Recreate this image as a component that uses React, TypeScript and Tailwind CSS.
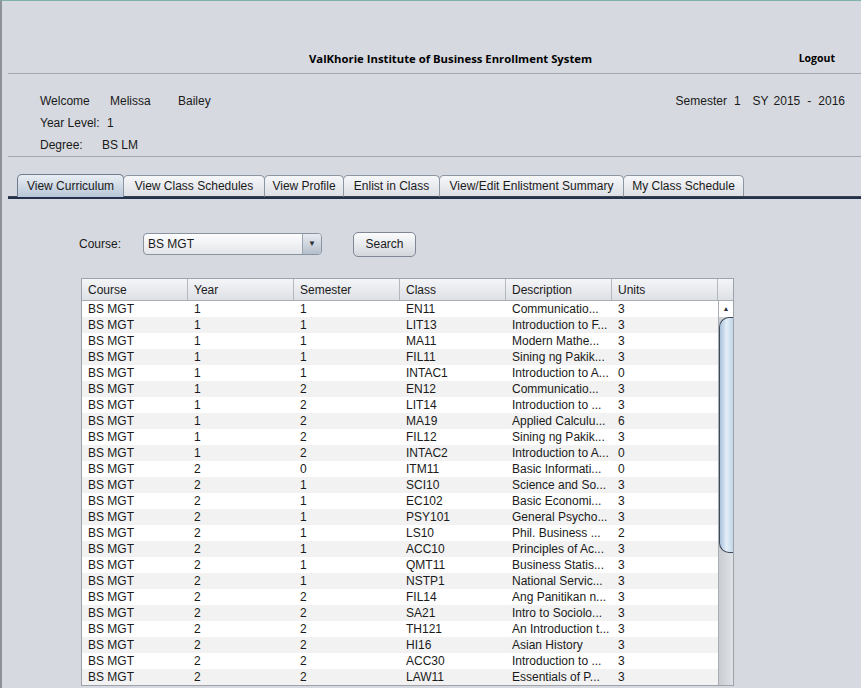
import React from 'react';

const rows: string[][] = [
  ['BS MGT', '1', '1', 'EN11', 'Communicatio...', '3'],
  ['BS MGT', '1', '1', 'LIT13', 'Introduction to F...', '3'],
  ['BS MGT', '1', '1', 'MA11', 'Modern Mathe...', '3'],
  ['BS MGT', '1', '1', 'FIL11', 'Sining ng Pakik...', '3'],
  ['BS MGT', '1', '1', 'INTAC1', 'Introduction to A...', '0'],
  ['BS MGT', '1', '2', 'EN12', 'Communicatio...', '3'],
  ['BS MGT', '1', '2', 'LIT14', 'Introduction to ...', '3'],
  ['BS MGT', '1', '2', 'MA19', 'Applied Calculu...', '6'],
  ['BS MGT', '1', '2', 'FIL12', 'Sining ng Pakik...', '3'],
  ['BS MGT', '1', '2', 'INTAC2', 'Introduction to A...', '0'],
  ['BS MGT', '2', '0', 'ITM11', 'Basic Informati...', '0'],
  ['BS MGT', '2', '1', 'SCI10', 'Science and So...', '3'],
  ['BS MGT', '2', '1', 'EC102', 'Basic Economi...', '3'],
  ['BS MGT', '2', '1', 'PSY101', 'General Psycho...', '3'],
  ['BS MGT', '2', '1', 'LS10', 'Phil. Business ...', '2'],
  ['BS MGT', '2', '1', 'ACC10', 'Principles of Ac...', '3'],
  ['BS MGT', '2', '1', 'QMT11', 'Business Statis...', '3'],
  ['BS MGT', '2', '1', 'NSTP1', 'National Servic...', '3'],
  ['BS MGT', '2', '2', 'FIL14', 'Ang Panitikan n...', '3'],
  ['BS MGT', '2', '2', 'SA21', 'Intro to Sociolo...', '3'],
  ['BS MGT', '2', '2', 'TH121', 'An Introduction t...', '3'],
  ['BS MGT', '2', '2', 'HI16', 'Asian History', '3'],
  ['BS MGT', '2', '2', 'ACC30', 'Introduction to ...', '3'],
  ['BS MGT', '2', '2', 'LAW11', 'Essentials of P...', '3'],
];

const headers = ['Course', 'Year', 'Semester', 'Class', 'Description', 'Units'];

const tabs = [
  { label: 'View Curriculum', w: 'w-[107px]', active: true },
  { label: 'View Class Schedules', w: 'w-[142px]' },
  { label: 'View Profile', w: 'w-[80px]' },
  { label: 'Enlist in Class', w: 'w-[97px]' },
  { label: 'View/Edit Enlistment Summary', w: 'w-[185px]' },
  { label: 'My Class Schedule', w: 'w-[121px]' },
];

export default function App() {
  return (
    <div
      className="w-[861px] h-[688px] overflow-hidden bg-[#d6d9df] border-t border-t-[#7fb3aa] border-l-2 border-l-[#8d9299] text-[12px] text-[#1a1a1a]"
      style={{ fontFamily: '"Liberation Sans", Arial, sans-serif' }}
    >
      {/* Header */}
      <div className="flex items-center h-[16px] mt-[50px] font-bold text-black" style={{ fontFamily: '"Open Sans", "Noto Sans", sans-serif' }}>
        <span className="ml-[307px] text-[11.3px]">ValKhorie Institute of Business Enrollment System</span>
        <span className="ml-auto mr-[26px] text-[10.5px]">Logout</span>
      </div>
      <div className="ml-[6px] mt-[6px] h-px bg-[#a3a7ae]" />

      {/* Student info */}
      <div className="flex mt-[19px]">
        <div className="ml-[38px] flex flex-col">
          <div className="flex h-[16px] items-center">
            <span className="w-[70px]">Welcome</span>
            <span className="w-[68px]">Melissa</span>
            <span>Bailey</span>
          </div>
          <div className="flex h-[16px] items-center mt-[6px]">
            <span className="w-[67px]">Year Level:</span>
            <span>1</span>
          </div>
          <div className="flex h-[16px] items-center mt-[6px]">
            <span className="w-[62px]">Degree:</span>
            <span>BS LM</span>
          </div>
        </div>
        <div className="ml-auto mr-[16px] flex h-[16px] items-center whitespace-nowrap">
          <span>Semester</span>
          <span className="ml-[7px]">1</span>
          <span className="ml-[12px]">SY</span>
          <span className="ml-[5px]">2015</span>
          <span className="ml-[7px]">-</span>
          <span className="ml-[7px]">2016</span>
        </div>
      </div>
      <div className="ml-[6px] mt-[3px] h-px bg-[#a3a7ae]" />

      {/* Tabs */}
      <div className="flex items-end mt-[17px] ml-[6px]">
        <div className="w-[9px] border-b border-b-[#3a4250]" />
        {tabs.map((t) => (
          <div
            key={t.label}
            className={
              t.active
                ? `${t.w} h-[23px] flex items-center justify-center rounded-t-[5px] border border-b-0 border-[#6e7b8e] bg-gradient-to-b from-[#e9eef4] to-[#b8c6d7] -mr-px`
                : `${t.w} h-[22px] flex items-center justify-center rounded-t-[5px] border border-[#8c95a2] border-b-[#3a4250] bg-gradient-to-b from-[#f6f7f9] to-[#dcdfe4] -mr-px`
            }
          >
            {t.label}
          </div>
        ))}
        <div className="flex-1 border-b border-b-[#3a4250]" />
      </div>
      <div className="ml-[6px] h-[2px] bg-[#24314d]" />

      {/* Search row */}
      <div className="flex items-center mt-[33px] h-[24px]">
        <span className="ml-[77px] w-[64px]">Course:</span>
        <div className="w-[179px] h-[22px] flex items-center rounded-[4px] border border-[#8a93a0] bg-gradient-to-b from-[#fdfdfe] to-[#e3e6ea] overflow-hidden">
          <span className="pl-[4px] flex-1">BS MGT</span>
          <div className="w-[19px] h-full flex items-center justify-center border-l border-[#9aa3b0] bg-gradient-to-b from-[#e8ecf1] to-[#b4bfcc] text-[8px] text-[#2b2f36]">
            ▼
          </div>
        </div>
        <button className="ml-[31px] w-[63px] h-[25px] rounded-[5px] border border-[#7f8796] bg-gradient-to-b from-[#fcfcfd] to-[#d3d7dd] text-[12px] text-[#1a1a1a]">
          Search
        </button>
      </div>

      {/* Table */}
      <div className="ml-[79px] mt-[22px] w-[653px] border border-[#9ea3aa] bg-white">
        <div className="flex h-[22px] bg-gradient-to-b from-[#f4f5f7] to-[#dde0e5] border-b border-[#a9aeb5]">
          {headers.map((h) => (
            <div key={h} className="w-[106px] px-[6px] flex items-center border-r border-[#b3b8bf]">
              {h}
            </div>
          ))}
          <div className="flex-1" />
        </div>
        <div className="flex">
          <div className="w-[636px]">
            {rows.map((r, i) => (
              <div
                key={i}
                className={`flex h-[16px] items-center ${i % 2 === 0 ? 'bg-white' : 'bg-[#f2f2f2]'}`}
              >
                {r.map((c, j) => (
                  <div key={j} className="w-[106px] pl-[6px] whitespace-nowrap overflow-hidden">
                    {c}
                  </div>
                ))}
              </div>
            ))}
          </div>
          {/* Scrollbar */}
          <div className="w-[15px] bg-gradient-to-r from-[#c9ccd1] to-[#dfe2e6] border-l border-[#a9aeb5] flex flex-col">
            <div className="h-[16px] bg-white flex items-center justify-center text-[7px] text-[#2b2f36]">▲</div>
            <div className="h-[236px] rounded-tl-[10px] rounded-bl-[10px] border border-r-0 border-[#3f4a5a] bg-gradient-to-r from-[#a9c2dc] via-[#e4eef8] to-[#c2d6ea]" />
          </div>
        </div>
      </div>
    </div>
  );
}
